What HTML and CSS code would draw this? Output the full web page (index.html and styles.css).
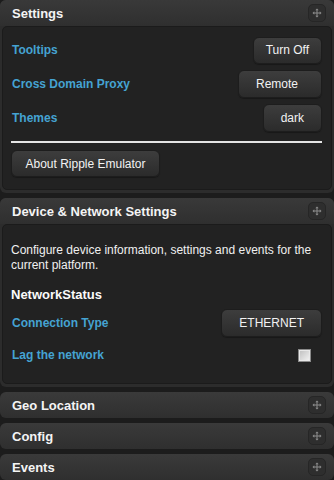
FILE: index.html
```html
<!DOCTYPE html>
<html lang="en">
<head>
  <meta charset="UTF-8">
  <title>Ripple Emulator</title>
  <link rel="stylesheet" href="styles.css">
</head>
<body>
  <div class="panel">
    <div class="panel-header">
      <span class="panel-title">Settings</span>
      <span class="move-btn">
        <svg width="10" height="10" viewBox="0 0 10 10"><path d="M5 0.5L3.3 2.3H4.5V4.5H2.3V3.3L0.5 5L2.3 6.7V5.5H4.5V7.7H3.3L5 9.5L6.7 7.7H5.5V5.5H7.7V6.7L9.5 5L7.7 3.3V4.5H5.5V2.3H6.7Z" fill="#8d8d8d"/></svg>
      </span>
    </div>
    <div class="panel-body settings-body">
      <div class="row">
        <span class="label">Tooltips</span>
        <button class="btn btn-tight">Turn Off</button>
      </div>
      <div class="row">
        <span class="label">Cross Domain Proxy</span>
        <button class="btn btn-remote">Remote</button>
      </div>
      <div class="row">
        <span class="label">Themes</span>
        <button class="btn">dark</button>
      </div>
      <hr class="divider">
      <button class="btn btn-about">About Ripple Emulator</button>
    </div>
  </div>

  <div class="panel">
    <div class="panel-header">
      <span class="panel-title">Device &amp; Network Settings</span>
      <span class="move-btn">
        <svg width="10" height="10" viewBox="0 0 10 10"><path d="M5 0.5L3.3 2.3H4.5V4.5H2.3V3.3L0.5 5L2.3 6.7V5.5H4.5V7.7H3.3L5 9.5L6.7 7.7H5.5V5.5H7.7V6.7L9.5 5L7.7 3.3V4.5H5.5V2.3H6.7Z" fill="#8d8d8d"/></svg>
      </span>
    </div>
    <div class="panel-body device-body">
      <p class="desc">Configure device information, settings and events for the current platform.</p>
      <h3 class="section-title">NetworkStatus</h3>
      <div class="row row-conn">
        <span class="label">Connection Type</span>
        <button class="btn">ETHERNET</button>
      </div>
      <div class="row row-lag">
        <span class="label">Lag the network</span>
        <input type="checkbox" class="check">
      </div>
    </div>
  </div>

  <div class="panel collapsed">
    <div class="panel-header">
      <span class="panel-title">Geo Location</span>
      <span class="move-btn">
        <svg width="10" height="10" viewBox="0 0 10 10"><path d="M5 0.5L3.3 2.3H4.5V4.5H2.3V3.3L0.5 5L2.3 6.7V5.5H4.5V7.7H3.3L5 9.5L6.7 7.7H5.5V5.5H7.7V6.7L9.5 5L7.7 3.3V4.5H5.5V2.3H6.7Z" fill="#8d8d8d"/></svg>
      </span>
    </div>
  </div>

  <div class="panel collapsed">
    <div class="panel-header">
      <span class="panel-title">Config</span>
      <span class="move-btn">
        <svg width="10" height="10" viewBox="0 0 10 10"><path d="M5 0.5L3.3 2.3H4.5V4.5H2.3V3.3L0.5 5L2.3 6.7V5.5H4.5V7.7H3.3L5 9.5L6.7 7.7H5.5V5.5H7.7V6.7L9.5 5L7.7 3.3V4.5H5.5V2.3H6.7Z" fill="#8d8d8d"/></svg>
      </span>
    </div>
  </div>

  <div class="panel collapsed">
    <div class="panel-header">
      <span class="panel-title">Events</span>
      <span class="move-btn">
        <svg width="10" height="10" viewBox="0 0 10 10"><path d="M5 0.5L3.3 2.3H4.5V4.5H2.3V3.3L0.5 5L2.3 6.7V5.5H4.5V7.7H3.3L5 9.5L6.7 7.7H5.5V5.5H7.7V6.7L9.5 5L7.7 3.3V4.5H5.5V2.3H6.7Z" fill="#8d8d8d"/></svg>
      </span>
    </div>
  </div>
</body>
</html>
```

FILE: styles.css
```css
* {
  margin: 0;
  padding: 0;
  box-sizing: border-box;
}

body {
  font-family: 'Liberation Sans', Arial, sans-serif;
  font-size: 12px;
  background: #1c1c1c;
  color: #f0f0f0;
  width: 334px;
  height: 480px;
  overflow: hidden;
}

.panel {
  background: #2c2c2c;
  border-radius: 6px;
  margin-bottom: 5px;
  padding-bottom: 3px;
}

.panel.collapsed {
  padding-bottom: 0;
  background: linear-gradient(#3a3a3a, #2f2f2f);
}

.panel-header {
  height: 26px;
  display: flex;
  align-items: center;
  justify-content: space-between;
  padding: 0 8px 0 12px;
  border-radius: 6px 6px 0 0;
  background: linear-gradient(#393939, #2f2f2f);
}

.collapsed .panel-header {
  background: none;
}

.panel-title {
  font-size: 13px;
  font-weight: bold;
  color: #f4f4f4;
}

.move-btn {
  width: 18px;
  height: 18px;
  display: flex;
  align-items: center;
  justify-content: center;
  border-radius: 5px;
  background: #2e2e2e;
  border: 1px solid #262626;
}

.panel-body {
  background: #222;
  margin: 0 2px;
  border: 1px solid #1b1b1b;
  border-radius: 5px;
}

.settings-body {
  padding: 9px 9px 12px 8px;
  display: flex;
  flex-direction: column;
  gap: 6px;
}

.row {
  display: flex;
  align-items: center;
  justify-content: space-between;
  height: 28px;
  padding-left: 1px;
}

.label {
  font-weight: bold;
  color: #45a3d2;
}

.btn {
  font-family: 'Liberation Sans', Arial, sans-serif;
  font-size: 12px;
  color: #f2f2f2;
  height: 28px;
  padding: 0 17px;
  border: 1px solid #1d1d1d;
  border-radius: 6px;
  background: linear-gradient(#3d3d3d, #2b2b2b);
  box-shadow: 0 1px 1px rgba(0, 0, 0, 0.3);
}

.btn-tight {
  padding: 0 12px;
  height: 27px;
}

.btn-remote {
  width: 84px;
  text-align: left;
}

.divider {
  border: none;
  height: 2px;
  background: #e4e4e4;
  margin: 3px 0 1px;
}

.btn-about {
  align-self: flex-start;
  height: 27px;
  width: 149px;
  padding: 0;
}

.device-body {
  padding: 18px 9px 14px 8px;
}

.desc {
  line-height: 15px;
  color: #f0f0f0;
}

.section-title {
  font-size: 13px;
  line-height: 16px;
  font-weight: bold;
  color: #fafafa;
  margin-top: 14px;
}

.row-conn {
  margin-top: 6px;
}

.row-lag {
  margin-top: 4px;
}

.check {
  appearance: none;
  width: 13px;
  height: 13px;
  margin-right: 11px;
  border: 1px solid #8a8a8a;
  background: linear-gradient(135deg, #bdbdbd, #f4f4f4);
  box-shadow: inset 0 0 0 1px #e8e8e8;
}
```
